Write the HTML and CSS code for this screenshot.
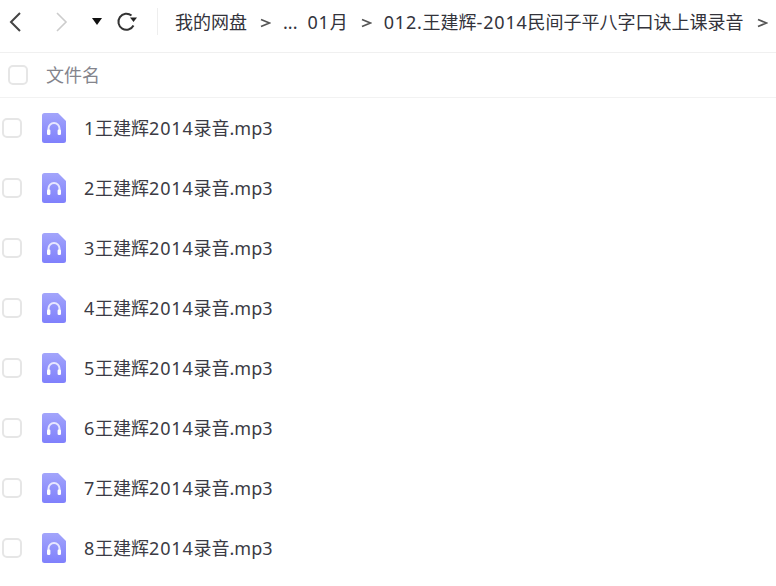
FILE: index.html
```html
<!DOCTYPE html>
<html lang="zh-CN">
  <head>
    <meta charset="utf-8">
    <title>我的网盘</title>
    <link rel="stylesheet" href="styles.css">
  </head>
  <body>
    <svg class="defs" width="0" height="0">
      <defs>
        <linearGradient id="audioFill" x1="0" y1="0" x2="0" y2="1">
          <stop offset="0" stop-color="#a3a5fb"/>
          <stop offset="1" stop-color="#7f80fc"/>
        </linearGradient>
        <symbol id="audio" viewBox="0 0 24 30">
          <path d="M2.5 0H16L24 8V27.5A2.5 2.5 0 0 1 21.5 30H2.5A2.5 2.5 0 0 1 0 27.5V2.5A2.5 2.5 0 0 1 2.5 0Z" fill="url(#audioFill)"/>
          <path d="M6.5 19V15.5a5.5 5.5 0 0 1 11 0V19" fill="none" stroke="#e8e8ff" stroke-width="2"/>
          <rect x="5" y="16.500" width="3.400" height="5.500" rx="1.200" fill="#fff"/>
          <rect x="15.600" y="16.500" width="3.400" height="5.500" rx="1.200" fill="#fff"/>
        </symbol>
        <symbol id="sep" viewBox="0 0 11 10">
          <path d="M1 1.500L9.500 5L1 8.500" fill="none" stroke="#555" stroke-width="1.800"/>
        </symbol>
      </defs>
    </svg>

    <div class="toolbar">
      <div class="nav">
        <svg class="nav-back" width="14" height="22" viewBox="0 0 14 22"><path d="M12 2L3 11L12 20" fill="none" stroke="#444" stroke-width="2"/></svg>
        <svg class="nav-next" width="14" height="22" viewBox="0 0 14 22"><path d="M2 2L11 11L2 20" fill="none" stroke="#ccc" stroke-width="1.600"/></svg>
        <svg class="nav-drop" width="10" height="7" viewBox="0 0 10 7"><path d="M0 0H10L5 7Z" fill="#111"/></svg>
        <svg class="nav-refresh" width="22" height="22" viewBox="0 0 22 22"><path d="M17.500 14.500A8 8 0 1 1 15.500 4.600" fill="none" stroke="#333" stroke-width="2"/><path d="M14 6.500H21L17.500 11Z" fill="#222"/></svg>
      </div>
      <div class="crumbs">
        <span>我的网盘</span>
        <svg class="sep"><use href="#sep"/></svg>
        <span class="more">...</span>
        <span><span class="num">01</span>月</span>
        <svg class="sep"><use href="#sep"/></svg>
        <span><span class="num">012.</span>王建辉<span class="num">-2014</span>民间子平八字口诀上课录音</span>
        <svg class="sep"><use href="#sep"/></svg>
      </div>
    </div>

    <div class="list-head">
      <span class="check head-check"></span>
      <span class="head-name">文件名</span>
    </div>

    <ul class="files">
      <li><span class="check"></span><svg class="file-icon"><use href="#audio"/></svg><span><span class="num">1</span>王建辉<span class="num">2014</span>录音.mp3</span></li>
      <li><span class="check"></span><svg class="file-icon"><use href="#audio"/></svg><span><span class="num">2</span>王建辉<span class="num">2014</span>录音.mp3</span></li>
      <li><span class="check"></span><svg class="file-icon"><use href="#audio"/></svg><span><span class="num">3</span>王建辉<span class="num">2014</span>录音.mp3</span></li>
      <li><span class="check"></span><svg class="file-icon"><use href="#audio"/></svg><span><span class="num">4</span>王建辉<span class="num">2014</span>录音.mp3</span></li>
      <li><span class="check"></span><svg class="file-icon"><use href="#audio"/></svg><span><span class="num">5</span>王建辉<span class="num">2014</span>录音.mp3</span></li>
      <li><span class="check"></span><svg class="file-icon"><use href="#audio"/></svg><span><span class="num">6</span>王建辉<span class="num">2014</span>录音.mp3</span></li>
      <li><span class="check"></span><svg class="file-icon"><use href="#audio"/></svg><span><span class="num">7</span>王建辉<span class="num">2014</span>录音.mp3</span></li>
      <li><span class="check"></span><svg class="file-icon"><use href="#audio"/></svg><span><span class="num">8</span>王建辉<span class="num">2014</span>录音.mp3</span></li>
    </ul>
  </body>
</html>
```

FILE: styles.css
```css
* {
  margin: 0;
  padding: 0;
  box-sizing: border-box;
}
html, body {
  height: 100%;
  overflow: hidden;
}
body {
  background: #fff;
  color: #3b3b44;
  font-family: "Noto Sans", "Noto Sans CJK SC", sans-serif;
  font-size: 18px;
  line-height: 24px;
}
.defs {
  display: block;
  height: 0;
}
.num {
  letter-spacing: 0.8px;
}
.toolbar {
  display: flex;
  align-items: center;
  height: 53px;
  padding-bottom: 9px;
  border-bottom: 1px solid #f0f0f0;
  white-space: nowrap;
  overflow: hidden;
}
.nav {
  flex: none;
  display: flex;
  align-items: center;
  width: 158px;
  height: 27px;
  padding-left: 8px;
  border-right: 1px solid #eeeeee;
}
.nav-next {
  margin-left: 33px;
}
.nav-drop {
  margin-left: 23px;
}
.nav-refresh {
  margin-left: 14px;
}
.crumbs {
  flex: none;
  display: flex;
  align-items: center;
  padding-left: 17px;
  color: #33333b;
}
.sep {
  flex: none;
  width: 11px;
  height: 10px;
  margin: 3px 12px 0 13px;
}
.more {
  margin-right: 10px;
}
.list-head {
  display: flex;
  align-items: center;
  height: 45px;
  padding-left: 8px;
  border-bottom: 1px solid #f2f2f2;
}
.check {
  flex: none;
  width: 20px;
  height: 20px;
  border: 2px solid #e6e6e6;
  border-radius: 5px;
  background: #fff;
}
.head-name {
  margin-left: 18px;
  color: #84848c;
}
.files {
  list-style: none;
}
.files li {
  display: flex;
  align-items: center;
  height: 60px;
  padding-left: 2px;
}
.file-icon {
  flex: none;
  width: 24px;
  height: 30px;
  margin: 0 18px 0 20px;
}
```
